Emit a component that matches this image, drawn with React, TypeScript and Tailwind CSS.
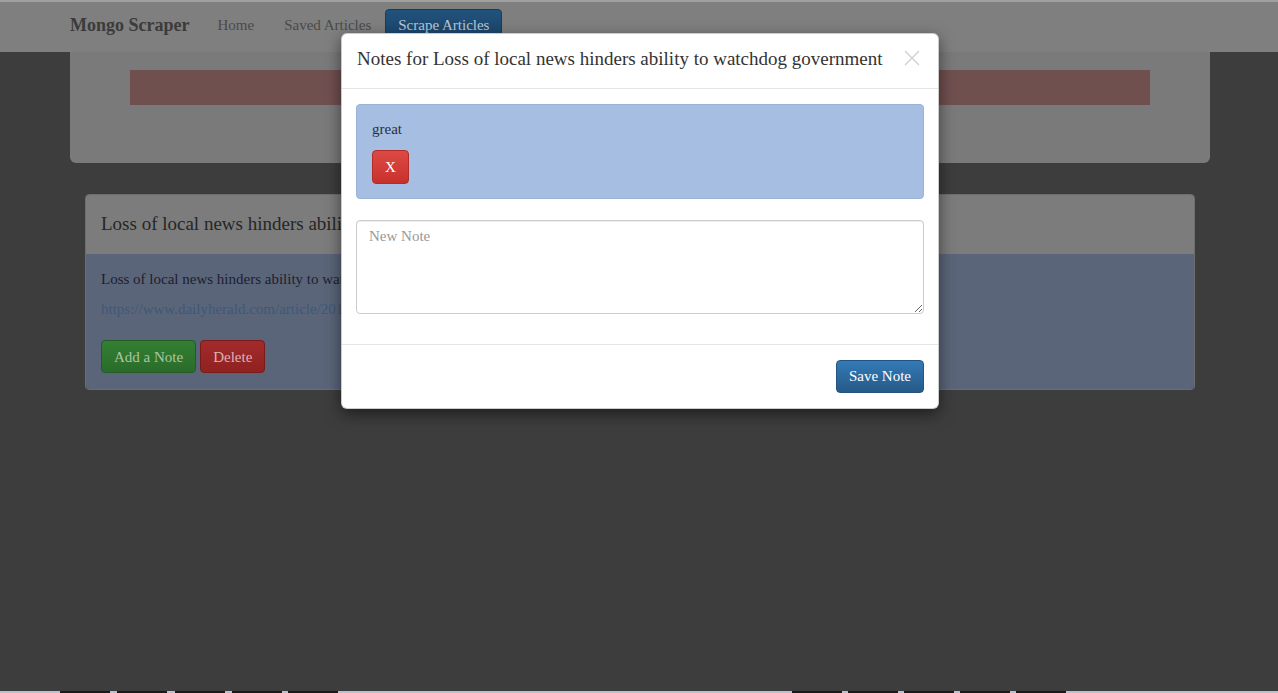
import React from 'react';

const serif = "font-['Liberation_Serif','Times_New_Roman',serif]";

function NavBar() {
  return (
    <nav className="h-[52px] shrink-0 border-t-2 border-[#a0a0a0] bg-[#7f7f7f]">
      <div className="mx-auto flex h-full w-[1170px] items-center pb-[3px] pl-[16px]">
        <span className="text-[18px] font-bold text-[#3b3b3b]">Mongo Scraper</span>
        <a className="ml-[28px] text-[15px] text-[#4a4a4a]">Home</a>
        <a className="ml-[30px] text-[15px] text-[#4a4a4a]">Saved Articles</a>
        <button className="ml-[14px] h-[33px] rounded-[4px] border border-[#173c5c] bg-linear-to-b from-[#22527c] to-[#1a4368] px-[12px] text-[15px] text-[#b9c9d9]">
          Scrape Articles
        </button>
      </div>
    </nav>
  );
}

function Jumbotron() {
  return (
    <div className="mx-auto w-[1170px] pl-[16px] pr-[14px]">
      <div className="h-[111px] rounded-b-[6px] bg-[#7a7a7a] px-[60px] pt-[18px]">
        <div className="h-[35px] bg-[#704f4f]" />
      </div>
    </div>
  );
}

function ArticlePanel() {
  return (
    <div className="mx-auto mt-[31px] w-[1170px] pl-[31px] pr-[29px]">
      <div className="overflow-hidden rounded-[4px] border border-[#6e6e6e]">
        <div className="flex h-[59px] items-center bg-[#7c7c7c] px-[15px]">
          <h3 className="text-[19px] text-[#262626]">
            Loss of local news hinders ability to watchdog government
          </h3>
        </div>
        <div className="bg-[#5b6579] px-[15px] pb-[16px] pt-[15px] text-[15px] leading-[20px]">
          <p className="text-[#1c2030]">
            Loss of local news hinders ability to watchdog government
          </p>
          <p className="mt-[10px] text-[#3e5878]">
            https://www.dailyherald.com/article/20180302/news/180309681
          </p>
          <div className="mt-[21px] flex gap-[4px]">
            <button className="h-[33px] rounded-[4px] border border-[#245a24] bg-linear-to-b from-[#337f33] to-[#2a6c2a] px-[12px] text-[15px] text-[#a9c6a9]">
              Add a Note
            </button>
            <button className="h-[33px] rounded-[4px] border border-[#7a1a1a] bg-linear-to-b from-[#a42a2a] to-[#8f2222] px-[12px] text-[15px] text-[#dcb2b2]">
              Delete
            </button>
          </div>
        </div>
      </div>
    </div>
  );
}

function NotesModal() {
  return (
    <div className="absolute left-[341px] top-[33px] w-[598px] rounded-[6px] border border-black/20 bg-white shadow-[0_5px_15px_rgba(0,0,0,0.5)]">
      <div className="flex h-[55px] items-center justify-between border-b border-[#e5e5e5] pb-[3px] pl-[15px] pr-[17px]">
        <h4 className="text-[19px] text-[#333]">
          Notes for Loss of local news hinders ability to watchdog government
        </h4>
        <button aria-label="Close" className="mb-[4px] flex h-[18px] w-[18px] items-center justify-center">
          <svg width="16" height="16" viewBox="0 0 16 16">
            <path d="M1 1 L15 15 M15 1 L1 15" stroke="#cfcfcf" strokeWidth="1.4" />
          </svg>
        </button>
      </div>

      <div className="px-[14px] pb-[30px] pt-[15px]">
        <div className="rounded-[4px] border border-[#9cb2d6] bg-[#a7bee3] px-[15px] pb-[14px] pt-[14px]">
          <p className="text-[15px] leading-[20px] text-[#2b2f38]">great</p>
          <button className="mt-[11px] h-[34px] w-[37px] rounded-[4px] border border-[#b52b27] bg-linear-to-b from-[#dc4a45] to-[#c9302c] text-[15px] text-white">
            X
          </button>
        </div>
        <textarea
          placeholder="New Note"
          className="mt-[21px] block h-[94px] w-full rounded-[4px] border border-[#ccc] px-[12px] py-[5px] text-[15px] leading-[20px] shadow-[inset_0_1px_1px_rgba(0,0,0,0.075)] outline-none placeholder:text-[#999]"
        />
      </div>

      <div className="flex justify-end border-t border-[#e5e5e5] px-[14px] pb-[15px] pt-[15px]">
        <button className="h-[33px] rounded-[4px] border border-[#245580] bg-linear-to-b from-[#337ab7] to-[#265a88] px-[12px] text-[15px] text-white">
          Save Note
        </button>
      </div>
    </div>
  );
}

function TaskStrip() {
  const left = [60, 117, 175, 232, 288];
  const right = [792, 848, 904, 960, 1016];
  return (
    <div className="relative h-[2px] shrink-0 bg-[#b8c2ce]">
      {[...left, ...right].map((x) => (
        <div key={x} className="absolute top-0 h-[2px] w-[50px] bg-[#1a1a1a]" style={{ left: x }} />
      ))}
    </div>
  );
}

export default function App() {
  return (
    <div className={`relative flex h-[693px] w-full flex-col overflow-hidden bg-[#3d3d3d] ${serif}`}>
      <NavBar />
      <div className="flex-1">
        <Jumbotron />
        <ArticlePanel />
      </div>
      <TaskStrip />
      <NotesModal />
    </div>
  );
}
